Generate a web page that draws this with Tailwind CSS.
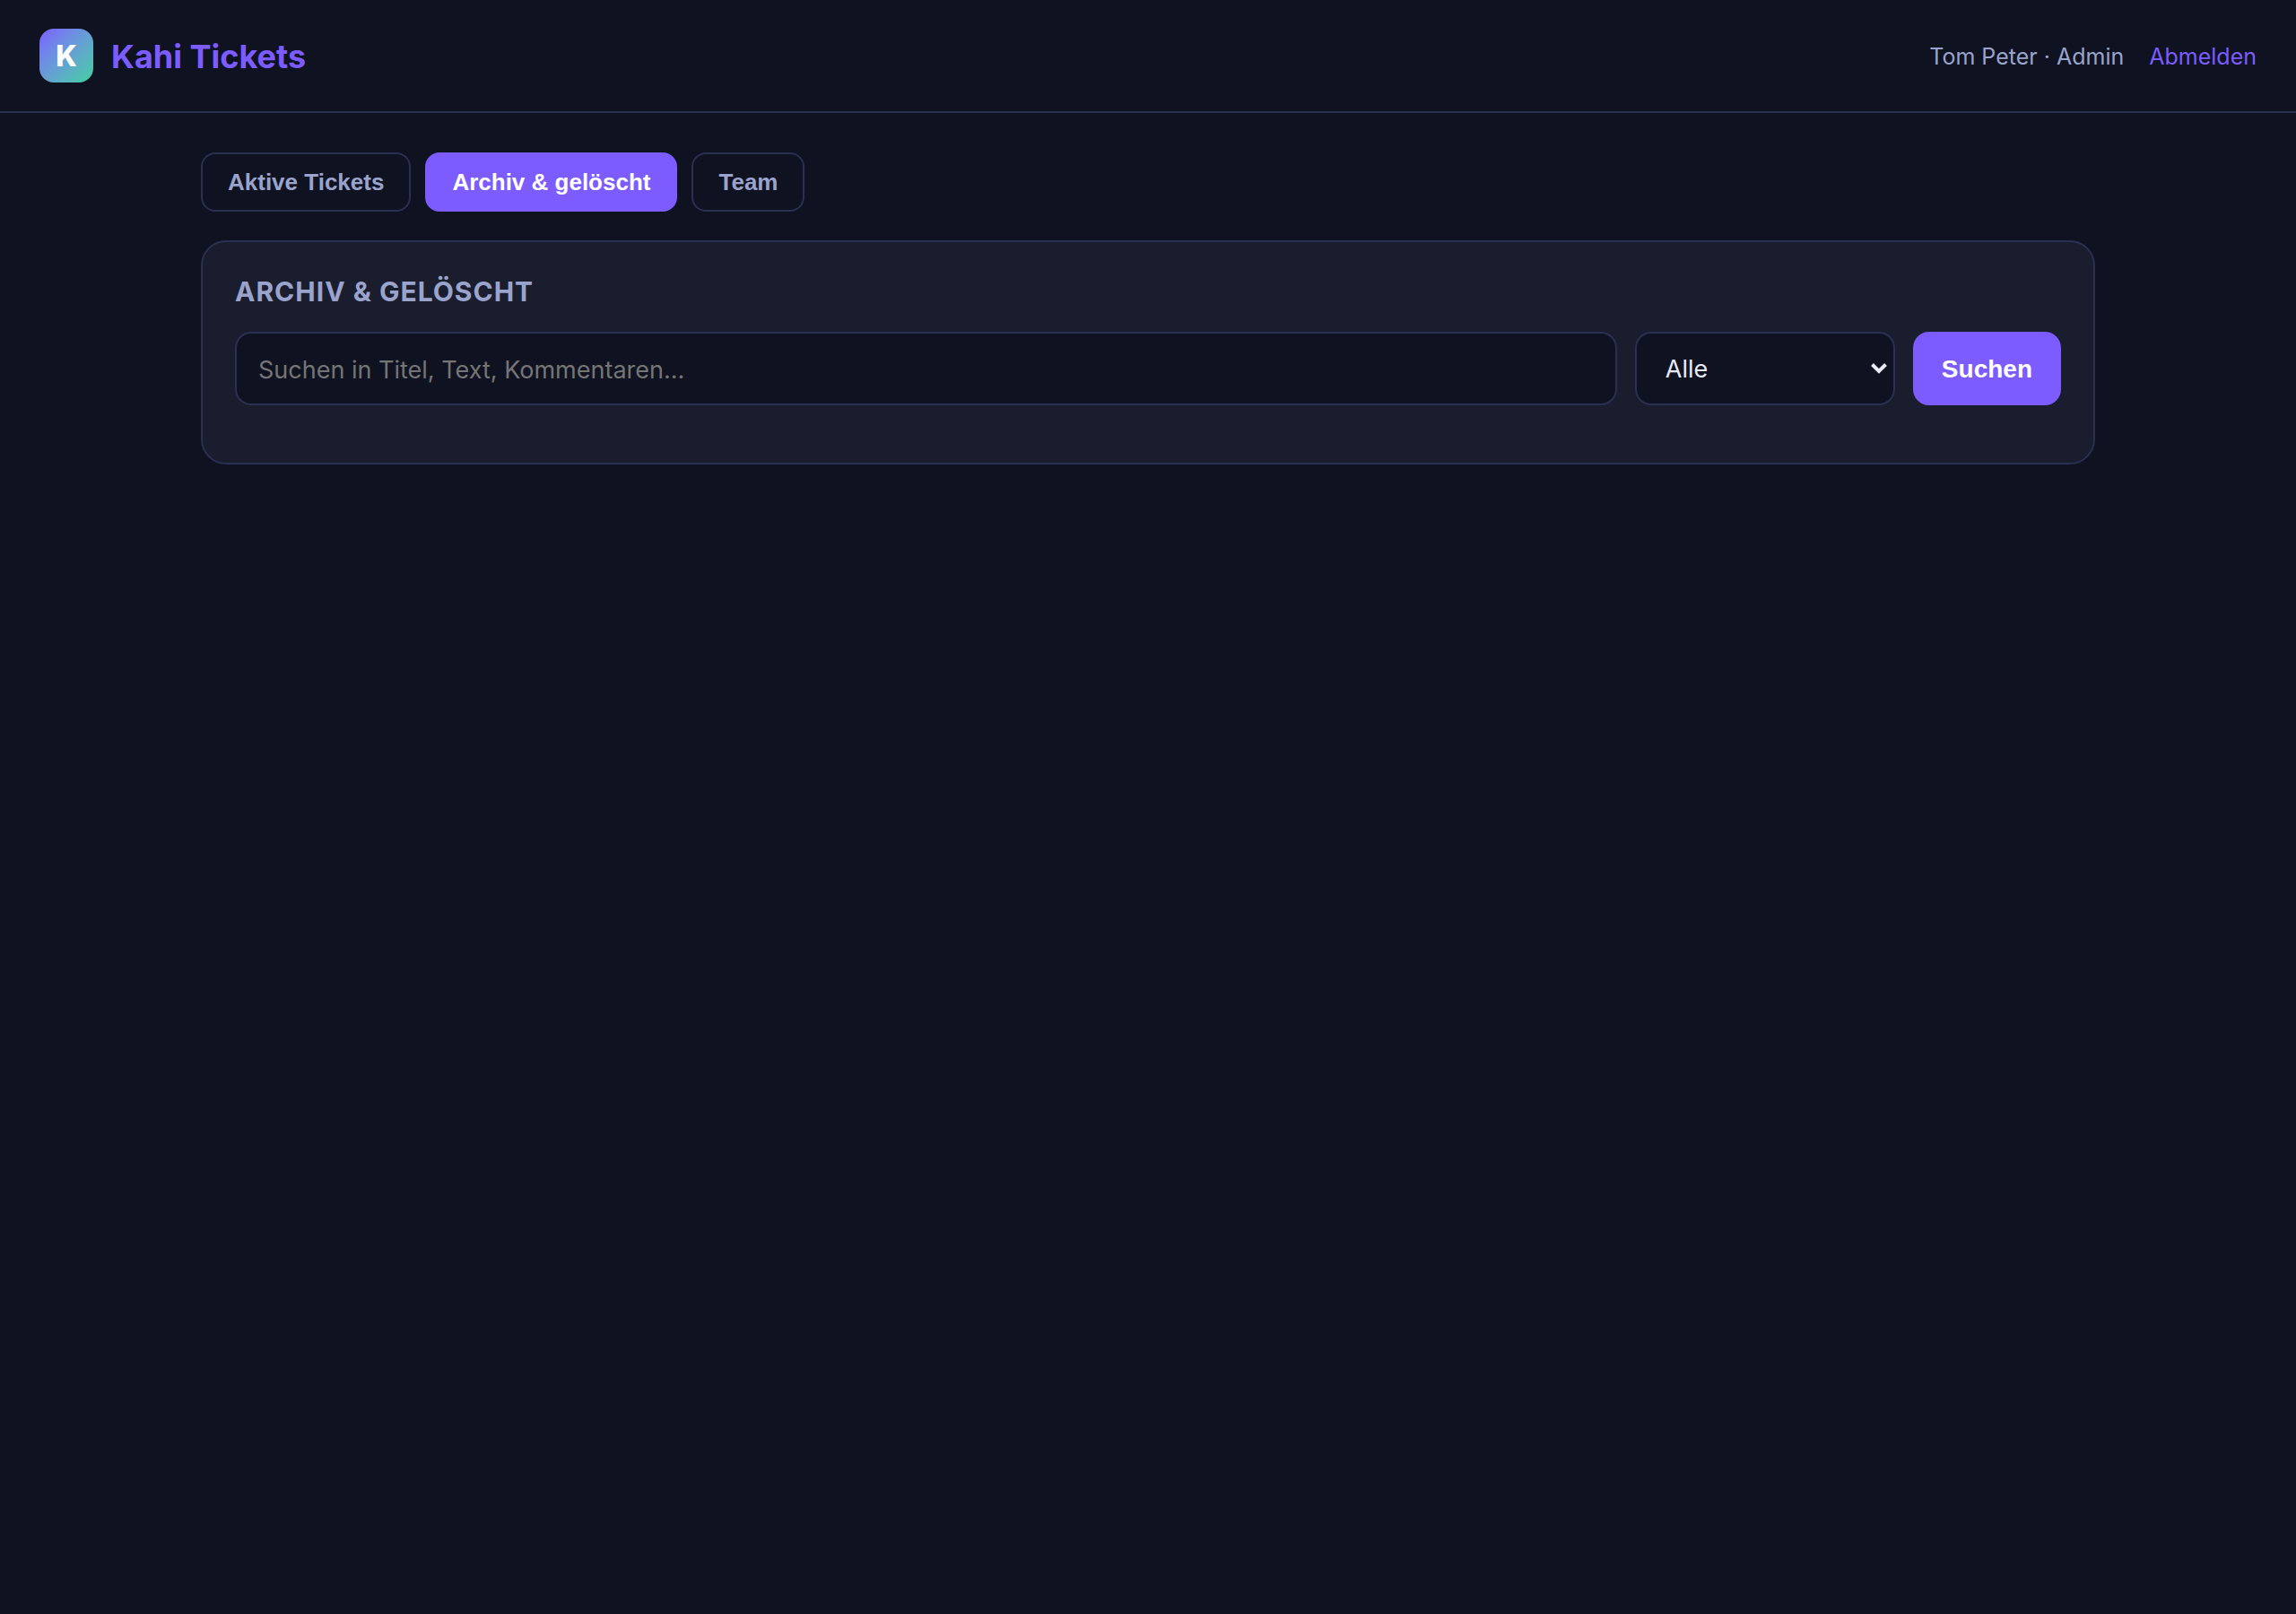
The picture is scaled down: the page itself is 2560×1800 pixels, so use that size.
<!DOCTYPE html>
<html lang="de">

<head>
  <meta charset="UTF-8" />
  <meta name="viewport" content="width=device-width, initial-scale=1.0" />
  <title>Kahi Tickets</title>
  <script src="https://cdn.jsdelivr.net/npm/@tailwindcss/browser@4"></script>
</head>

<body class="min-h-screen bg-[#0f1220] text-[#e8eaf6] font-['Inter','Liberation_Sans',sans-serif]">

  <!-- Header -->
  <header class="flex items-center justify-between px-11 py-8 border-b-2 border-[#2a3050]">
    <div class="flex items-center gap-5">
      <div class="flex items-center justify-center size-15 pt-0.5 rounded-2xl bg-linear-135 from-[#7c5cff] to-[#3ecf9f] text-white text-[32px] leading-none font-extrabold">K</div>
      <h1 class="pt-0.5 text-[36px] leading-[44px] font-bold text-[#7c5cff]">Kahi Tickets</h1>
    </div>
    <div class="flex items-center gap-7 pt-0.5 text-[25px] leading-8 text-[#9aa3cc]">
      <span>Tom Peter · Admin</span>
      <a href="#" class="text-[#7c5cff] hover:underline">Abmelden</a>
    </div>
  </header>

  <main class="max-w-[2200px] mx-auto px-11 pt-11">

    <!-- Tabs -->
    <nav class="flex gap-4 mb-8 font-['Liberation_Sans',Arial,sans-serif] text-[26px] leading-[30px] font-bold">
      <button type="button" class="px-7 py-4 rounded-2xl border-2 border-[#2a3050] text-[#9aa3cc]">Aktive Tickets</button>
      <button type="button" class="px-7 py-4 rounded-2xl border-2 border-[#7c5cff] bg-[#7c5cff] text-white">Archiv &amp; gelöscht</button>
      <button type="button" class="px-7 py-4 rounded-2xl border-2 border-[#2a3050] text-[#9aa3cc]">Team</button>
    </nav>

    <!-- Archive search -->
    <section class="px-9 pt-9 pb-16 rounded-[28px] border-2 border-[#2a3050] bg-[#1a1d2e]">
      <h2 class="mb-[26px] text-[30px] leading-[38px] font-bold uppercase tracking-[1px] text-[#9aa3cc]">Archiv &amp; gelöscht</h2>
      <form class="flex gap-5 text-[27px] leading-[34px]">
        <input type="search" aria-label="Suchen" placeholder="Suchen in Titel, Text, Kommentaren..." class="flex-1 min-w-0 px-6 pt-6 pb-5 rounded-[18px] border-2 border-[#2a3050] bg-[#0f1220] placeholder:text-[#757575]" />
        <div class="relative w-[290px]">
          <select aria-label="Status" class="appearance-none size-full px-8 pt-0.5 rounded-[18px] border-2 border-[#2a3050] bg-[#0f1220]">
            <option>Alle</option>
            <option>Archiviert</option>
            <option>Gelöscht</option>
          </select>
          <svg class="absolute right-2 top-1/2 -translate-y-1/2 pointer-events-none" width="20" height="14" viewBox="0 0 20 14" fill="none" stroke="#e8eaf6" stroke-width="4">
            <path d="M2.5 2.5 L10 10 L17.5 2.5" />
          </svg>
        </div>
        <button type="submit" class="px-8 pt-0.5 rounded-[18px] bg-[#7c5cff] text-[28px] text-white font-bold font-['Liberation_Sans',Arial,sans-serif]">Suchen</button>
      </form>
    </section>

  </main>

</body>

</html>
